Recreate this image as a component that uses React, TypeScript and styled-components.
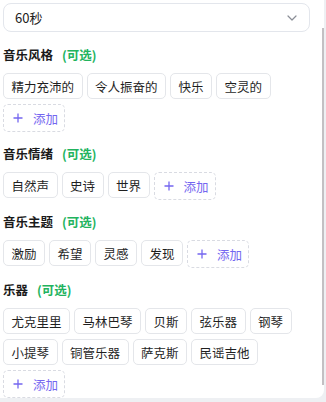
import React from "react";
import styled, { createGlobalStyle } from "styled-components";

const GlobalStyle = createGlobalStyle`
  html, body {
    margin: 0;
    padding: 0;
    background: #eef0f3;
  }
  body {
    font-family: "Noto Sans CJK SC", "Noto Sans", "Liberation Sans", sans-serif;
    color: #1f1f1f;
  }
  * { box-sizing: border-box; }
`;

const Panel = styled.div`
  position: relative;
  width: 324px;
  height: 398px;
  background: #ffffff;
  border-bottom-right-radius: 8px;
  overflow: hidden;
  padding: 3px 0 0 3px;
`;

const ScrollThumb = styled.div`
  position: absolute;
  right: 0;
  top: 28px;
  width: 2px;
  height: 357px;
  background: #c3c0c3;
`;

const Select = styled.div`
  width: 307px;
  height: 29px;
  border: 1px solid #e3e6ec;
  border-radius: 8px;
  display: flex;
  align-items: center;
  justify-content: space-between;
  padding: 0 12px 0 11px;
  font-size: 13px;
  color: #222;
  margin-bottom: 13px;
`;

const Section = styled.div`
  margin-bottom: 12px;
`;

const Title = styled.div`
  height: 20px;
  line-height: 20px;
  font-size: 12.5px;
  font-weight: 700;
  color: #1a1a1a;
  margin-bottom: 8px;
  display: flex;
  align-items: center;
`;

const Optional = styled.span`
  color: #22b35e;
  margin-left: 9px;
  font-weight: 700;
`;

const TagList = styled.div`
  display: flex;
  flex-wrap: wrap;
  gap: 5px 4px;
  width: 307px;
`;

const Tag = styled.div`
  height: 26px;
  display: flex;
  align-items: center;
  padding: 0 7.5px;
  border: 1px solid #e4e6ea;
  border-radius: 5px;
  font-size: 12.5px;
  color: #1f1f1f;
  background: #fff;
`;

const AddButton = styled.div`
  height: 28px;
  display: flex;
  align-items: center;
  padding: 0 6px 0 9px;
  border: 1px dashed #d9dbe2;
  border-radius: 5px;
  font-size: 12.5px;
  color: #7466f0;
  gap: 10px;
`;

const Chevron = () => (
  <svg width="10" height="6" viewBox="0 0 10 6" fill="none">
    <path d="M1 1l4 4 4-4" stroke="#8a8e96" strokeWidth="1.2" strokeLinecap="round" strokeLinejoin="round" />
  </svg>
);

const Plus = () => (
  <svg width="10" height="10" viewBox="0 0 10 10" fill="none">
    <path d="M5 0.5v9M0.5 5h9" stroke="#7466f0" strokeWidth="1.3" />
  </svg>
);

const sections = [
  { title: "音乐风格", tags: ["精力充沛的", "令人振奋的", "快乐", "空灵的"] },
  { title: "音乐情绪", tags: ["自然声", "史诗", "世界"] },
  { title: "音乐主题", tags: ["激励", "希望", "灵感", "发现"] },
  { title: "乐器", tags: ["尤克里里", "马林巴琴", "贝斯", "弦乐器", "钢琴", "小提琴", "铜管乐器", "萨克斯", "民谣吉他"] },
];

export default function App() {
  return (
    <>
      <GlobalStyle />
      <Panel>
        <Select>
          <span>60秒</span>
          <Chevron />
        </Select>
        {sections.map((s) => (
          <Section key={s.title}>
            <Title>
              {s.title}
              <Optional>(可选)</Optional>
            </Title>
            <TagList>
              {s.tags.map((t) => (
                <Tag key={t}>{t}</Tag>
              ))}
              <AddButton>
                <Plus />
                添加
              </AddButton>
            </TagList>
          </Section>
        ))}
        <ScrollThumb />
      </Panel>
    </>
  );
}
